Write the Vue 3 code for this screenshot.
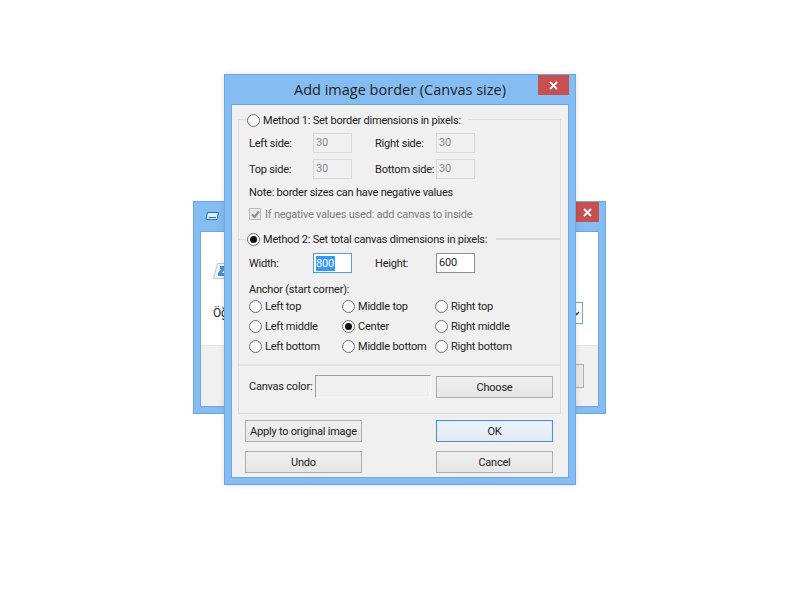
<script setup>
const anchors = ['Left top', 'Middle top', 'Right top', 'Left middle', 'Center', 'Right middle', 'Left bottom', 'Middle bottom', 'Right bottom']
</script>

<template>
  <div class="desktop">
    <div class="window back">
      <div class="back-title">
        <svg class="app-icon" width="14" height="10" viewBox="0 0 14 10"><path d="M2.500 1.500h11l-1.500 7H1z" fill="#dbeeff" stroke="#2f6fb5"/><path d="M3.500 6.500h7.500" stroke="#2f6fb5"/></svg>
        <span class="close small"><svg width="9" height="9" viewBox="0 0 9 9"><path d="M1 1l7 7M8 1l-7 7" stroke="#fff" stroke-width="1.800"/></svg></span>
      </div>
      <div class="back-client">
        <div class="back-main">
          <svg class="logo" width="12" height="16" viewBox="0 0 12 16"><path d="M4.500.5H12v15H.5z" fill="#f4f8fc" stroke="#a9c9ea"/><path d="M7 3h5v3L9 10h3v3H5v-3l3-4H7z" fill="#4f8fd0"/></svg>
          <div class="back-row">
            <span class="back-label">Öğ</span>
            <span class="back-select"><svg width="7" height="5" viewBox="0 0 7 5"><path d="M1 1l2.500 2.500L6 1" fill="none" stroke="#333" stroke-width="1.300"/></svg></span>
          </div>
        </div>
        <div class="back-footer"><span class="back-button"></span></div>
      </div>
    </div>

    <div class="window front">
      <div class="title-bar">
        <span class="title">Add image border (Canvas size)</span>
        <span class="close"><svg width="9" height="9" viewBox="0 0 9 9"><path d="M1 1l7 7M8 1l-7 7" stroke="#fff" stroke-width="1.800"/></svg></span>
      </div>
      <div class="client">
        <div class="group">
          <div class="legend first"><span class="radio"></span><span>Method 1: Set border dimensions in pixels:</span></div>
          <div class="field-grid">
            <span>Left side:</span><span class="input disabled">30</span>
            <span>Right side:</span><span class="input disabled">30</span>
          </div>
          <div class="field-grid second">
            <span>Top side:</span><span class="input disabled">30</span>
            <span>Bottom side:</span><span class="input disabled">30</span>
          </div>
          <div class="note">Note: border sizes can have negative values</div>
          <div class="check-row">
            <span class="check"><svg width="9" height="9" viewBox="0 0 9 9"><path d="M1 4.500l2.500 2.500L8 1.500" fill="none" stroke="#8a8a8a" stroke-width="2"/></svg></span>
            <span>If negative values used: add canvas to inside</span>
          </div>
          <div class="legend second-legend"><span class="stub"></span><span class="radio on"></span><span>Method 2: Set total canvas dimensions in pixels:</span><span class="legend-line"></span></div>
          <div class="field-grid third">
            <span>Width:</span><span class="input active"><span class="selected">800</span></span>
            <span>Height:</span><span class="input active-plain">600</span>
          </div>
          <div class="anchor-title">Anchor (start corner):</div>
          <div class="anchors">
            <div v-for="a in anchors" :key="a" class="anchor">
              <span class="radio" :class="{ on: a === 'Center' }"></span><span>{{ a }}</span>
            </div>
          </div>
          <div class="color-row">
            <span class="color-label">Canvas color:</span>
            <span class="color-field"></span>
            <span class="button wide">Choose</span>
          </div>
        </div>
        <div class="actions">
          <span class="button">Apply to original image</span>
          <span class="button default">OK</span>
          <span class="button">Undo</span>
          <span class="button">Cancel</span>
        </div>
      </div>
    </div>
  </div>
</template>

<style>
html, body { margin: 0; background: #fff; }
</style>

<style scoped>
.desktop {
  position: relative;
  width: 800px;
  height: 600px;
  overflow: hidden;
  background: #fff;
  font-family: Roboto, sans-serif;
  font-size: 11px;
  letter-spacing: -0.22px;
  color: #222;
}
.window {
  position: absolute;
  box-sizing: border-box;
  background: #85bdf2;
  outline: 1px solid #6aa8e4;
  outline-offset: -1px;
  display: flex;
  flex-direction: column;
}
.back { left: 193px; top: 201px; width: 413px; height: 213px; padding: 0 8px 8px; }
.back-title { height: 31px; display: flex; justify-content: space-between; align-items: flex-start; flex: none; }
.app-icon { margin: 10px 0 0 4px; }
.close {
  width: 31px;
  height: 20px;
  background: #c75050;
  display: flex;
  align-items: center;
  justify-content: center;
}
.close.small { width: 23px; margin: 1px -1px 0 0; }
.back-client { flex: 1; background: #fff; display: flex; flex-direction: column; outline: 1px solid #6fa6dc; }
.back-main { flex: 1; padding: 31px 15px 0 12px; }
.logo { display: block; }
.back-row { display: flex; justify-content: space-between; align-items: center; margin-top: 23px; }
.back-label { font-size: 12px; }
.back-select {
  box-sizing: border-box;
  width: 20px;
  height: 22px;
  border: 1px solid #7da2ce;
  display: flex;
  align-items: center;
  justify-content: flex-end;
  padding-right: 2px;
}
.back-footer {
  height: 61px;
  box-sizing: border-box;
  background: #f0f0f0;
  border-top: 1px solid #e6e6e6;
  padding: 18px 14px 0 0;
  display: flex;
  justify-content: flex-end;
}
.back-button { width: 30px; height: 24px; box-sizing: border-box; border: 1px solid #adadad; background: #e8e8e8; }

.front { left: 224px; top: 74px; width: 352px; height: 411px; padding: 0 8px 8px; box-shadow: 0 0 6px rgba(0, 0, 0, 0.12); }
.title-bar { height: 31px; position: relative; flex: none; display: flex; justify-content: center; }
.title { font-family: "Open Sans", sans-serif; font-size: 14.500px; letter-spacing: 0; line-height: 31px; color: #222; }
.close:not(.small) { position: absolute; right: -1px; top: 1px; }
.client {
  flex: 1;
  background: #f0f0f0;
  outline: 1px solid #6fa6dc;
  padding: 14px 7px 0 6px;
  display: flex;
  flex-direction: column;
}
.group {
  position: relative;
  box-sizing: border-box;
  height: 295px;
  border: 1px solid #dcdcdc;
  padding: 0 0 0 10px;
}
.legend {
  display: flex;
  align-items: center;
  gap: 3px;
  height: 14px;
}
.legend.first { margin: -7px 0 0 -3px; width: fit-content; background: #f0f0f0; padding: 0 7px 0 1px; }
.radio {
  box-sizing: border-box;
  width: 13px;
  height: 13px;
  border: 1px solid #707070;
  border-radius: 50%;
  background: #fafafa;
  flex: none;
  display: block;
  position: relative;
}
.radio.on::after {
  content: "";
  position: absolute;
  inset: 2px;
  border-radius: 50%;
  background: #111;
}
.field-grid {
  display: grid;
  grid-template-columns: 64px 39px 23px 61px 39px;
  align-items: center;
  margin-top: 6px;
  height: 20px;
}
.field-grid > :nth-child(3) { grid-column: 4; white-space: nowrap; }
.field-grid > :nth-child(4) { grid-column: 5; }
.field-grid.third { margin-top: 7px; }
.input {
  box-sizing: border-box;
  height: 20px;
  width: 39px;
  border: 1px solid #abadb3;
  background: #fff;
  display: flex;
  align-items: center;
  padding-left: 2px;
  line-height: 18px;
}
.input.disabled { background: #f0f0f0; border-color: #d9d9d9; color: #8a8a8a; }
.input.active { border-color: #569de5; }
.input.active-plain { border-color: #8f8f8f; }
.selected { background: #3399ff; color: #fff; line-height: 15px; padding-right: 1px; }
.note { margin-top: 6px; height: 15px; line-height: 15px; }
.check-row {
  display: flex;
  align-items: center;
  gap: 4px;
  margin-top: 7px;
  height: 14px;
  color: #7d7d7d;
}
.check {
  box-sizing: border-box;
  width: 12px;
  height: 12px;
  border: 1px solid #bcbcbc;
  background: #e6e6e6;
  display: flex;
  align-items: center;
  justify-content: center;
}
.legend.second-legend { margin: 11px 0 0 -10px; }
.stub { width: 5px; height: 1px; background: #dcdcdc; }
.legend-line { flex: 1; height: 2px; background: #dcdcdc; margin-left: 6px; }
.anchor-title { margin-top: 9px; height: 15px; line-height: 15px; }
.anchors {
  display: grid;
  grid-template-columns: 93px 93px 1fr;
  grid-template-rows: 19px 20px 20px;
}
.anchor { display: flex; align-items: center; gap: 3px; }
.color-row {
  display: flex;
  align-items: flex-end;
  margin: 8px 0 0 -10px;
  border-top: 2px solid #e6e6e6;
  padding: 9px 7px 0 10px;
}
.color-label { width: 66px; flex: none; white-space: nowrap; align-self: center; }
.color-field {
  box-sizing: border-box;
  width: 116px;
  height: 23px;
  border: 1px solid;
  border-color: #a0a0a0 #fff #fff #a0a0a0;
}
.button {
  box-sizing: border-box;
  border: 1px solid #adadad;
  background: linear-gradient(#f0f0f0, #e5e5e5);
  height: 22px;
  display: flex;
  align-items: center;
  justify-content: center;
  white-space: nowrap;
}
.button.wide { width: 117px; margin-left: 5px; }
.actions {
  display: grid;
  grid-template-columns: 117px 117px;
  justify-content: space-between;
  gap: 9px 0;
  padding: 6px 8px 0 7px;
}
.button.default { border-color: #4a90d9; background: linear-gradient(#eaf4fd, #e3e9f0); box-shadow: inset 0 0 0 1px #dcecfc; }
</style>
